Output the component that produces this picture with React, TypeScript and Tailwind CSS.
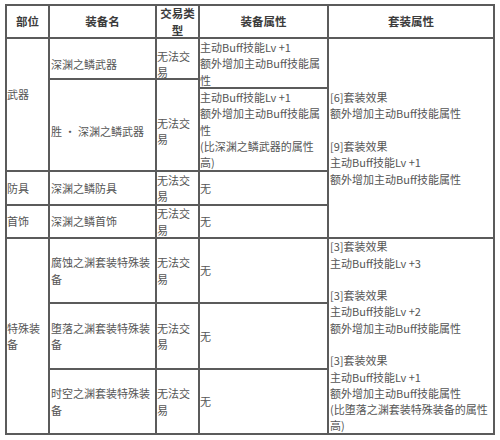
import React from "react";

function Lines({ lines }: { lines: string[] }) {
  return (
    <>
      {lines.map((l, i) => (
        <div key={i} className="whitespace-nowrap h-[16.3px]">
          {l === "" ? "\u00a0" : l}
        </div>
      ))}
    </>
  );
}

const TRADE = ["无法交", "易"];

export default function App() {
  return (
    <div
      className="min-h-screen bg-white pl-[5px] pt-[4px]"
      style={{ fontFamily: '"Noto Sans CJK SC", "Noto Sans", sans-serif' }}
    >
      <div className="w-[490px] bg-[#5b5b5b] p-[2px] flex flex-col gap-[2px] text-[11px] leading-[16.3px] text-[#555]">
        {/* header */}
        <div className="flex gap-[2px] h-[31px] font-semibold text-[#3c3c3c] text-[11.5px]">
          <div className="w-[41px] bg-white flex items-center justify-center text-center">部位</div>
          <div className="w-[105px] bg-white flex items-center justify-center text-center">装备名</div>
          <div className="w-[41px] bg-white flex flex-col items-center justify-center text-center leading-[17px]">
            <div>交易类</div>
            <div>型</div>
          </div>
          <div className="w-[127px] bg-white flex items-center justify-center text-center">装备属性</div>
          <div className="w-[164px] bg-white flex items-center justify-center text-center">套装属性</div>
        </div>

        {/* section A */}
        <div className="flex gap-[2px]">
          <div className="flex flex-col gap-[2px] w-[320px]">
            {/* weapon */}
            <div className="flex gap-[2px] h-[131px]">
              <div className="w-[41px] bg-white pt-[47px]">
                <Lines lines={["武器"]} />
              </div>
              <div className="flex flex-col gap-[2px] w-[148px]">
                <div className="flex gap-[2px] h-[39px]">
                  <div className="w-[105px] bg-white pl-px pt-[11px] flex flex-col justify-center">
                    <Lines lines={["深渊之鳞武器"]} />
                  </div>
                  <div className="w-[41px] bg-white pt-[11px] flex flex-col justify-center">
                    <Lines lines={TRADE} />
                  </div>
                </div>
                <div className="flex gap-[2px] flex-1">
                  <div className="w-[105px] bg-white pl-px pt-[13px] flex flex-col justify-center">
                    <Lines lines={["胜 · 深渊之鳞武器"]} />
                  </div>
                  <div className="w-[41px] bg-white pt-[12px] flex flex-col justify-center">
                    <Lines lines={TRADE} />
                  </div>
                </div>
              </div>
              <div className="flex flex-col gap-[2px] w-[127px]">
                <div className="h-[48px] bg-white">
                  <Lines lines={["主动Buff技能Lv +1", "额外增加主动Buff技能属", "性"]} />
                </div>
                <div className="flex-1 bg-white">
                  <Lines
                    lines={["主动Buff技能Lv +1", "额外增加主动Buff技能属", "性", "(比深渊之鳞武器的属性", "高)"]}
                  />
                </div>
              </div>
            </div>
            {/* armor */}
            <div className="flex gap-[2px] h-[32px]">
              <div className="w-[41px] bg-white flex flex-col justify-center">
                <Lines lines={["防具"]} />
              </div>
              <div className="w-[105px] bg-white pl-px flex flex-col justify-center">
                <Lines lines={["深渊之鳞防具"]} />
              </div>
              <div className="w-[41px] bg-white flex flex-col justify-center">
                <Lines lines={TRADE} />
              </div>
              <div className="w-[127px] bg-white flex flex-col justify-center">
                <Lines lines={["无"]} />
              </div>
            </div>
            {/* accessory */}
            <div className="flex gap-[2px] h-[31px]">
              <div className="w-[41px] bg-white flex flex-col justify-center">
                <Lines lines={["首饰"]} />
              </div>
              <div className="w-[105px] bg-white pl-px flex flex-col justify-center">
                <Lines lines={["深渊之鳞首饰"]} />
              </div>
              <div className="w-[41px] bg-white flex flex-col justify-center">
                <Lines lines={TRADE} />
              </div>
              <div className="w-[127px] bg-white flex flex-col justify-center">
                <Lines lines={["无"]} />
              </div>
            </div>
          </div>
          <div className="w-[164px] bg-white pl-px flex flex-col justify-center">
            <Lines
              lines={[
                "[6]套装效果",
                "额外增加主动Buff技能属性",
                "",
                "[9]套装效果",
                "主动Buff技能Lv +1",
                "额外增加主动Buff技能属性",
              ]}
            />
          </div>
        </div>

        {/* section B */}
        <div className="flex gap-[2px] h-[194px]">
          <div className="w-[41px] bg-white flex flex-col justify-center">
            <Lines lines={["特殊装", "备"]} />
          </div>
          <div className="flex flex-col gap-[2px] w-[277px]">
            {[
              ["腐蚀之渊套装特殊装", "h-[63px]"],
              ["堕落之渊套装特殊装", "h-[64px]"],
              ["时空之渊套装特殊装", "h-[63px]"],
            ].map(([name, h]) => (
              <div key={name} className={`flex gap-[2px] ${h}`}>
                <div className="w-[105px] bg-white pl-px flex flex-col justify-center">
                  <Lines lines={[name, "备"]} />
                </div>
                <div className="w-[41px] bg-white flex flex-col justify-center">
                  <Lines lines={TRADE} />
                </div>
                <div className="w-[127px] bg-white flex flex-col justify-center">
                  <Lines lines={["无"]} />
                </div>
              </div>
            ))}
          </div>
          <div className="w-[164px] bg-white pl-px flex flex-col justify-center">
            <Lines
              lines={[
                "[3]套装效果",
                "主动Buff技能Lv +3",
                "",
                "[3]套装效果",
                "主动Buff技能Lv +2",
                "额外增加主动Buff技能属性",
                "",
                "[3]套装效果",
                "主动Buff技能Lv +1",
                "额外增加主动Buff技能属性",
                "(比堕落之渊套装特殊装备的属性",
                "高)",
              ]}
            />
          </div>
        </div>
      </div>
    </div>
  );
}
